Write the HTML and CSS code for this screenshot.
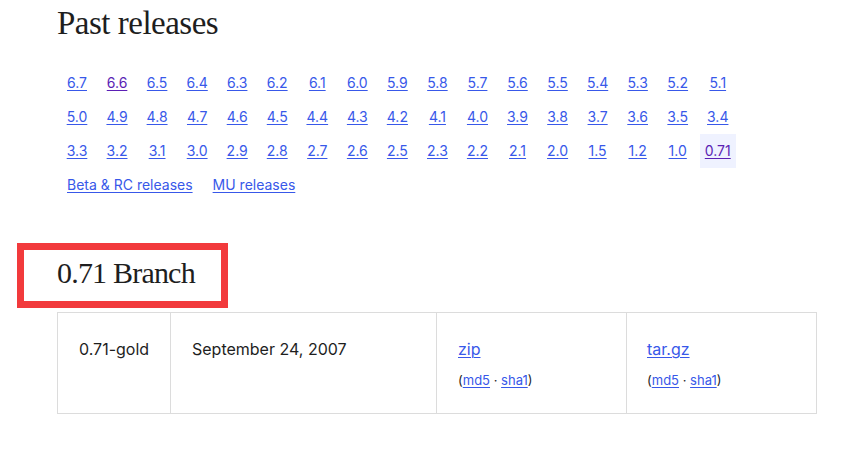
FILE: index.html
```html
<!DOCTYPE html>
<html lang="en">
<head>
<meta charset="utf-8">
<title>Past releases</title>
<link rel="stylesheet" href="styles.css">
</head>
<body>
<main class="page">
  <h2 class="title">Past releases</h2>
  <div class="versions">
    <a href="#">6.7</a><a class="visited" href="#">6.6</a><a href="#">6.5</a><a href="#">6.4</a><a href="#">6.3</a><a href="#">6.2</a><a href="#">6.1</a><a href="#">6.0</a><a href="#">5.9</a><a href="#">5.8</a><a href="#">5.7</a><a href="#">5.6</a><a href="#">5.5</a><a href="#">5.4</a><a href="#">5.3</a><a href="#">5.2</a><a href="#">5.1</a>
    <a href="#">5.0</a><a href="#">4.9</a><a href="#">4.8</a><a href="#">4.7</a><a href="#">4.6</a><a href="#">4.5</a><a href="#">4.4</a><a href="#">4.3</a><a href="#">4.2</a><a href="#">4.1</a><a href="#">4.0</a><a href="#">3.9</a><a href="#">3.8</a><a href="#">3.7</a><a href="#">3.6</a><a href="#">3.5</a><a href="#">3.4</a>
    <a href="#">3.3</a><a href="#">3.2</a><a href="#">3.1</a><a href="#">3.0</a><a href="#">2.9</a><a href="#">2.8</a><a href="#">2.7</a><a href="#">2.6</a><a href="#">2.5</a><a href="#">2.3</a><a href="#">2.2</a><a href="#">2.1</a><a href="#">2.0</a><a href="#">1.5</a><a href="#">1.2</a><a href="#">1.0</a><a class="visited current" href="#">0.71</a>
  </div>
  <div class="extra">
    <a href="#">Beta &amp; RC releases</a>
    <a href="#">MU releases</a>
  </div>

  <div class="branch">
    <h3 class="branch-title">0.71 Branch</h3>
    <div class="highlight"></div>
  </div>

  <table class="releases">
    <tr>
      <td class="c1">0.71-gold</td>
      <td class="c2">September 24, 2007</td>
      <td class="c3">
        <a class="dl" href="#">zip</a>
        <div class="sums">(<a href="#">md5</a> · <a href="#">sha1</a>)</div>
      </td>
      <td class="c4">
        <a class="dl" href="#">tar.gz</a>
        <div class="sums">(<a href="#">md5</a> · <a href="#">sha1</a>)</div>
      </td>
    </tr>
  </table>
</main>
</body>
</html>
```

FILE: styles.css
```css
* { box-sizing: border-box; }

html, body {
  margin: 0;
  padding: 0;
  background: #ffffff;
}

body {
  font-family: Inter, "Noto Sans", sans-serif;
  color: #1e1e1e;
}

.page {
  padding-left: 57px;
}

.title {
  margin: 3px 0 0 0;
  font-family: "Liberation Serif", "Times New Roman", serif;
  font-weight: 400;
  font-size: 33px;
  line-height: 40px;
  letter-spacing: -0.5px;
  color: #1e1e1e;
}

a {
  color: #3858e9;
  text-decoration: underline;
  text-decoration-thickness: 1px;
  text-underline-offset: 2px;
}

a.visited {
  color: #5b1fb5;
}

.versions {
  margin: 23px 0 0 2px;
  display: grid;
  grid-template-columns: repeat(17, 36px);
  column-gap: 4.06px;
  grid-auto-rows: 34px;
  font-size: 14px;
}

.versions a {
  display: block;
  text-align: center;
  line-height: 34px;
  padding: 0 5px;
}

.versions a.current {
  background: #eff2ff;
}

.extra {
  display: flex;
  gap: 10px;
  margin-left: 5px;
  font-size: 14px;
  line-height: 34px;
}

.extra a {
  padding: 0 5px;
}

.branch {
  position: relative;
  margin-top: 53px;
}

.branch-title {
  margin: 0;
  font-family: "Liberation Serif", "Times New Roman", serif;
  font-weight: 400;
  font-size: 30px;
  line-height: 36px;
  letter-spacing: -0.8px;
  color: #1e1e1e;
}

.highlight {
  position: absolute;
  left: -40px;
  top: -12px;
  width: 211px;
  height: 65px;
  border: 7px solid #f23a3c;
}

.releases {
  margin-top: 21px;
  border-collapse: collapse;
  width: 760px;
  table-layout: fixed;
  font-size: 16px;
}

.releases td {
  border: 1px solid #dcdcdc;
  vertical-align: top;
  padding: 24px 20px 24px 21px;
  line-height: 24px;
}

.releases .c1 { width: 113px; }
.releases .c2 { width: 266px; }
.releases .c3 { width: 190px; }
.releases .c4 { width: 190px; }

.releases .c4 { padding-left: 20px; }

.sums {
  margin-top: 10px;
  font-size: 13px;
  line-height: 18px;
  color: #1e1e1e;
}
```
